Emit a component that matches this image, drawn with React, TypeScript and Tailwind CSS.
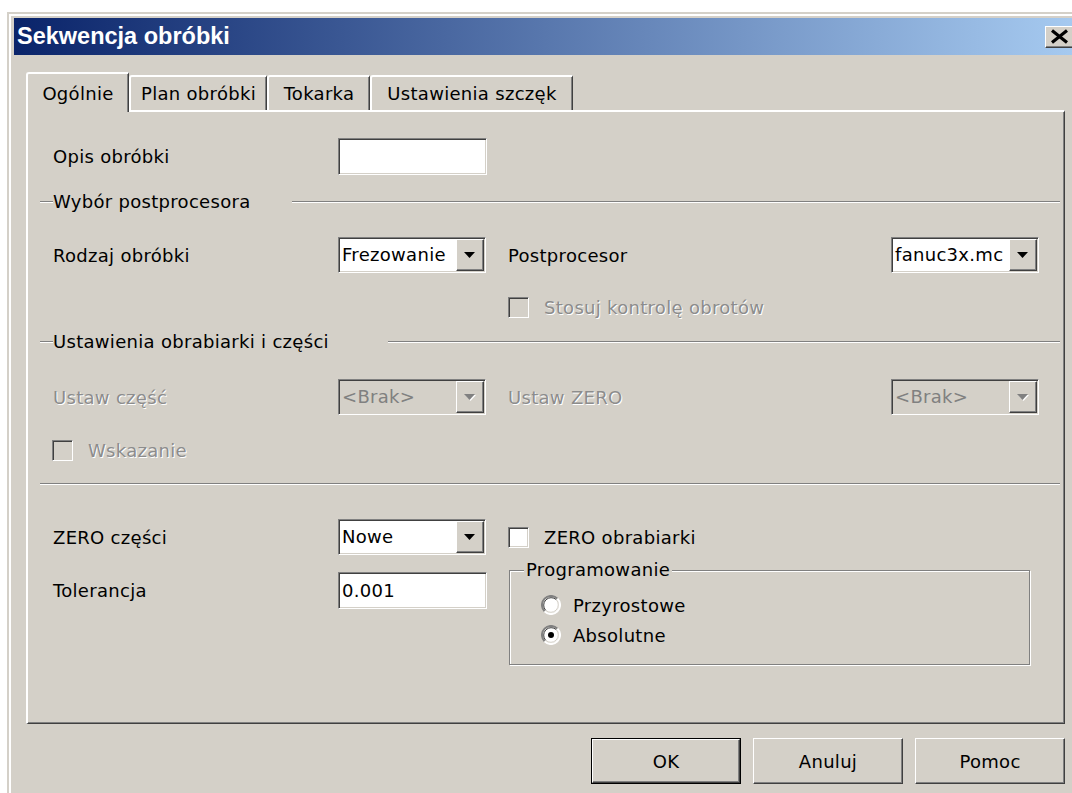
import type { ReactNode } from 'react';

// classic 3D edges
const sunken =
  'border border-t-[#808080] border-l-[#808080] border-b-white border-r-white shadow-[inset_1px_1px_0_#404040,inset_-1px_-1px_0_#d4d0c8]';
const raised =
  'border border-t-white border-l-white border-b-[#404040] border-r-[#404040] shadow-[inset_-1px_-1px_0_#808080]';
const etched = 'h-[2px] border-t border-b border-t-[#808080] border-b-white';
const grayText = 'text-[#8c8c8c] [text-shadow:1px_1px_0_#fff]';

const tabs = [
  { label: 'Ogólnie', width: 'w-[103px]', active: true },
  { label: 'Plan obróbki', width: 'w-[138px]', active: false },
  { label: 'Tokarka', width: 'w-[103px]', active: false },
  { label: 'Ustawienia szczęk', width: 'w-[203px]', active: false },
];

function TextBox({ value = '' }: { value?: string }) {
  return (
    <div className={`flex h-[37px] w-[149px] shrink-0 items-center bg-white pl-[3px] ${sunken}`}>
      {value}
    </div>
  );
}

function Combo({ value, disabled = false }: { value: string; disabled?: boolean }) {
  return (
    <div
      className={`flex h-[36px] w-[148px] shrink-0 p-px ${sunken} ${disabled ? 'bg-[#d4d0c8]' : 'bg-white'}`}
    >
      <span
        className={`min-w-0 flex-1 overflow-hidden whitespace-nowrap pl-[2px] leading-[32px] ${disabled ? 'text-[#808080]' : 'text-black'}`}
      >
        {value}
      </span>
      <span className={`flex w-[28px] shrink-0 items-center justify-center bg-[#d4d0c8] ${raised}`}>
        <svg width="12" height="7" viewBox="0 0 12 7" aria-hidden="true">
          {disabled && <path d="M1 1h11L6.5 7z" fill="#fff" />}
          <path d="M0 0h11L5.5 6z" fill={disabled ? '#808080' : '#000'} />
        </svg>
      </span>
    </div>
  );
}

function CheckBox({ disabled = false }: { disabled?: boolean }) {
  return (
    <span
      className={`block h-[21px] w-[21px] shrink-0 ${sunken} ${disabled ? 'bg-[#d4d0c8]' : 'bg-white'}`}
    />
  );
}

function Radio({ checked = false }: { checked?: boolean }) {
  return (
    <svg width="20" height="20" viewBox="0 0 20 20" aria-hidden="true" className="shrink-0">
      <circle cx="10" cy="10" r="8" fill="#fff" />
      <path d="M3.6 16.4A9 9 0 0 1 16.4 3.6" fill="none" stroke="#808080" strokeWidth="2" />
      <path d="M16.4 3.6A9 9 0 0 1 3.6 16.4" fill="none" stroke="#fff" strokeWidth="2" />
      <path d="M4.7 15.3A7.5 7.5 0 0 1 15.3 4.7" fill="none" stroke="#404040" strokeWidth="1" />
      <path d="M15.3 4.7A7.5 7.5 0 0 1 4.7 15.3" fill="none" stroke="#d4d0c8" strokeWidth="1" />
      {checked && <circle cx="10" cy="10" r="3" fill="#000" />}
    </svg>
  );
}

function GroupLine({ title, width }: { title: string; width: string }) {
  return (
    <div className="flex h-[20px] items-center">
      <div className={`ml-[12px] w-[13px] ${etched}`} />
      <span className={`${width} shrink-0 leading-[20px]`}>{title}</span>
      <div className={`mr-[4px] flex-1 ${etched}`} />
    </div>
  );
}

function Button({ children, primary = false }: { children: ReactNode; primary?: boolean }) {
  return (
    <button
      type="button"
      className={`h-[46px] w-[150px] bg-[#d4d0c8] ${primary ? 'border border-black' : ''}`}
    >
      <span className={`flex h-full w-full items-center justify-center ${raised}`}>{children}</span>
    </button>
  );
}

export default function App() {
  return (
    <div className="h-[793px] w-[1072px] overflow-hidden bg-white font-['DejaVu_Sans',sans-serif] text-[18px] tracking-[0.3px] text-black">
      <div className="ml-[7px] mt-[12px] h-[800px] w-[1068px] border-t-2 border-l-2 border-t-[#d4d0c8] border-l-[#d4d0c8]">
        <div className="h-full border-t-2 border-l-2 border-t-white border-l-white bg-[#d4d0c8] pl-[3px] pt-[2px]">
          {/* title bar */}
          <div className="flex h-[37px] items-center justify-between bg-[linear-gradient(to_right,#0a246a,#a6caf0)] pl-[3px]">
            <span className="font-['Liberation_Sans',Arial,sans-serif] text-[23.5px] font-bold tracking-normal text-white">
              Sekwencja obróbki
            </span>
            <span className={`flex h-[22px] w-[30px] items-center pl-[4px] bg-[#d4d0c8] ${raised}`}>
              <svg width="19" height="15" viewBox="0 0 19 15" aria-hidden="true">
                <path d="M2 1.5l15 12M17 1.5l-15 12" stroke="#000" strokeWidth="3.2" />
              </svg>
            </span>
          </div>

          <div className="pl-[12px] pr-[10px] pt-[17px]">
            {/* tabs */}
            <div className="flex h-[38px] items-end">
              {tabs.map((tab) => (
                <div
                  key={tab.label}
                  className={`flex shrink-0 items-center justify-center rounded-tl-[3px] border-t-2 border-l-2 border-r border-t-white border-l-white border-r-[#404040] bg-[#d4d0c8] shadow-[inset_-1px_0_0_#808080] ${tab.width} ${tab.active ? 'relative z-10 -mb-[2px] h-[40px]' : 'h-[35px]'}`}
                >
                  {tab.label}
                </div>
              ))}
            </div>

            {/* tab page */}
            <div className="flex h-[614px] flex-col border-t-2 border-l-2 border-r border-b border-t-white border-l-white border-r-[#404040] border-b-[#404040] shadow-[inset_-1px_-1px_0_#808080]">
              <div className="mt-[26px] flex h-[37px] items-center">
                <span className="ml-[25px] w-[285px] shrink-0">Opis obróbki</span>
                <TextBox />
              </div>

              <div className="mt-[17px]">
                <GroupLine title="Wybór postprocesora" width="w-[239px]" />
              </div>

              <div className="mt-[25px] flex h-[36px] items-center">
                <span className="ml-[25px] w-[285px] shrink-0">Rodzaj obróbki</span>
                <Combo value="Frezowanie" />
                <span className="ml-[22px] w-[383px] shrink-0">Postprocesor</span>
                <Combo value="fanuc3x.mc" />
              </div>

              <div className="mt-[23px] flex h-[22px] items-center">
                <span className="ml-[480px]">
                  <CheckBox disabled />
                </span>
                <span className={`ml-[15px] ${grayText}`}>Stosuj kontrolę obrotów</span>
              </div>

              <div className="mt-[14px]">
                <GroupLine title="Ustawienia obrabiarki i części" width="w-[335px]" />
              </div>

              <div className="mt-[27px] flex h-[36px] items-center">
                <span className={`ml-[25px] w-[285px] shrink-0 ${grayText}`}>Ustaw część</span>
                <Combo value="<Brak>" disabled />
                <span className={`ml-[22px] w-[383px] shrink-0 ${grayText}`}>Ustaw ZERO</span>
                <Combo value="<Brak>" disabled />
              </div>

              <div className="mt-[24px] flex h-[22px] items-center">
                <span className="ml-[24px]">
                  <CheckBox disabled />
                </span>
                <span className={`ml-[15px] ${grayText}`}>Wskazanie</span>
              </div>

              <div className={`ml-[12px] mr-[4px] mt-[22px] ${etched}`} />

              <div className="mt-[34px] flex h-[36px] items-center">
                <span className="ml-[25px] w-[285px] shrink-0">ZERO części</span>
                <Combo value="Nowe" />
                <span className="ml-[22px] flex items-center">
                  <CheckBox />
                  <span className="ml-[15px]">ZERO obrabiarki</span>
                </span>
              </div>

              <div className="mt-[5px] flex items-start">
                <div className="mt-[12px] flex h-[36px] items-center">
                  <span className="ml-[25px] w-[285px] shrink-0">Tolerancja</span>
                  <TextBox value="0.001" />
                </div>
                <fieldset className="ml-[22px] h-[105px] w-[521px] border border-[#808080] pl-[14px] shadow-[inset_1px_1px_0_#fff,1px_1px_0_#fff]">
                  <legend className="bg-[#d4d0c8] px-[2px] leading-[20px]">Programowanie</legend>
                  <div className="ml-[17px] mt-[15px] flex h-[20px] items-center gap-[12px]">
                    <Radio />
                    <span>Przyrostowe</span>
                  </div>
                  <div className="ml-[17px] mt-[10px] flex h-[20px] items-center gap-[12px]">
                    <Radio checked />
                    <span>Absolutne</span>
                  </div>
                </fieldset>
              </div>
            </div>

            <div className="mt-[14px] flex justify-end gap-[12px]">
              <Button primary>OK</Button>
              <Button>Anuluj</Button>
              <Button>Pomoc</Button>
            </div>
          </div>
        </div>
      </div>
    </div>
  );
}
